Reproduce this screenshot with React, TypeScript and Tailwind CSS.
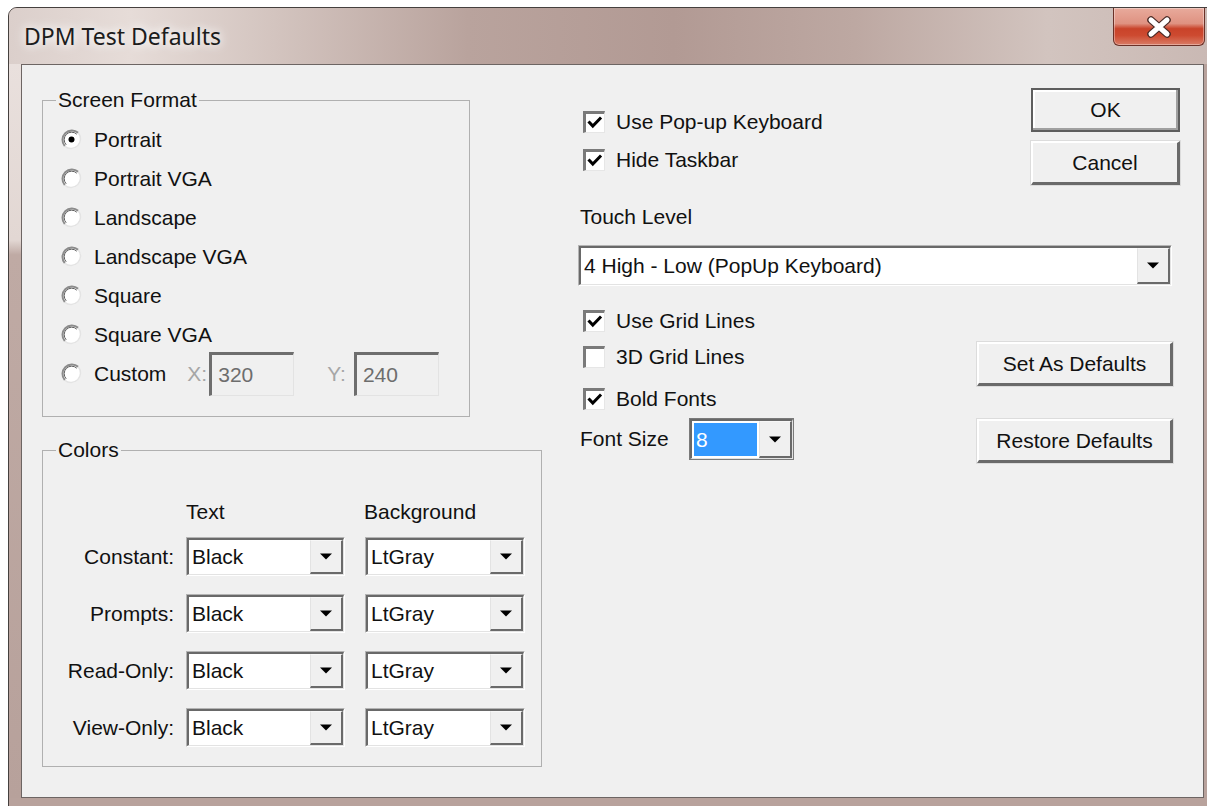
import React from "react";

const ui = "[font-family:'Liberation_Sans',Arial,sans-serif] text-[21px] leading-[24px] text-[#111111]";

function Radio({ checked }: { checked?: boolean }) {
  return (
    <svg width="21" height="21" viewBox="0 0 21 21" className="shrink-0">
      <circle cx="10.5" cy="10.5" r="9.5" fill="#ffffff" />
      <path d="M3.8 17.2 A9.5 9.5 0 0 1 17.2 3.8" stroke="#8c8c8c" strokeWidth="2" fill="none" />
      <path d="M5.2 15.8 A7.5 7.5 0 0 1 15.8 5.2" stroke="#5f5f5f" strokeWidth="1" fill="none" />
      <path d="M17.2 3.8 A9.5 9.5 0 0 1 3.8 17.2" stroke="#e4e4e4" strokeWidth="1.5" fill="none" />
      {checked && <circle cx="10.5" cy="10.5" r="3" fill="#000000" />}
    </svg>
  );
}

function Check({ checked }: { checked?: boolean }) {
  return (
    <div className="flex h-[22px] w-[22px] shrink-0 items-center justify-center border-t-[3px] border-l-[3px] border-t-[#7a7a7a] border-l-[#7a7a7a] border-b border-r border-b-[#e6e6e6] border-r-[#e6e6e6] bg-white">
      {checked && (
        <svg width="16" height="16" viewBox="0 0 16 16">
          <polyline points="2.5,7.5 5.8,11 13,3.6" fill="none" stroke="#000000" strokeWidth="3" strokeLinecap="square" />
        </svg>
      )}
    </div>
  );
}

function Arrow() {
  return (
    <svg width="12" height="7" viewBox="0 0 12 7">
      <path d="M0 0.5H12L6 6.5Z" fill="#000000" />
    </svg>
  );
}

function DropButton() {
  return (
    <div className="flex w-[33px] shrink-0 items-center justify-center self-stretch border-t border-l border-t-[#f7f7f7] border-l-[#e3e3e3] border-b-2 border-r-2 border-b-[#6a6a6a] border-r-[#6a6a6a] bg-[#f0f0f0]">
      <Arrow />
    </div>
  );
}

function Combo({ box, text, highlight, dark }: { box: string; text: string; highlight?: boolean; dark?: boolean }) {
  return (
    <div
      className={`flex ${box} border ${
        dark ? "border-[#7a7a7a]" : "border-t-[#b4b4b4] border-l-[#b4b4b4] border-b-white border-r-white"
      }`}
    >
      <div className="flex min-w-0 flex-1 border-t-2 border-l-2 border-t-[#696969] border-l-[#696969] border-b border-r border-b-[#e3e3e3] border-r-[#e3e3e3] bg-white">
        <div className="flex min-w-0 flex-1 items-center">
          {highlight ? (
            <span className="m-[2px] flex h-[calc(100%-4px)] flex-1 items-center bg-[#3399ff] pl-[2px] text-white">{text}</span>
          ) : (
            <span className="pl-[3px]">{text}</span>
          )}
        </div>
        <DropButton />
      </div>
    </div>
  );
}

function RadioRow({ label, checked, children }: { label: string; checked?: boolean; children?: React.ReactNode }) {
  return (
    <div className="flex h-[39px] items-center">
      <Radio checked={checked} />
      <span className="ml-[12px]">{label}</span>
      {children}
    </div>
  );
}

function CheckRow({ label, checked }: { label: string; checked?: boolean }) {
  return (
    <div className="flex h-[30px] items-center pl-[5px]">
      <Check checked={checked} />
      <span className="ml-[11px]">{label}</span>
    </div>
  );
}

function Disabled({ value }: { value: string }) {
  return (
    <div className="flex h-[44px] w-[85px] items-center border-t-[3px] border-l-[3px] border-t-[#6e6e6e] border-l-[#6e6e6e] border-b border-r border-b-[#e3e3e3] border-r-[#e3e3e3] bg-[#f0f0f0] pl-[6px] text-[#6d6d6d]">
      {value}
    </div>
  );
}

function Button({ label, wide, primary }: { label: string; wide?: boolean; primary?: boolean }) {
  const size = wide ? "w-[196px] h-[44px]" : "w-[149px] h-[44px]";
  return primary ? (
    <div className={`flex ${size} items-center justify-center border-2 border-[#5e5e5e] bg-[#f0f0f0] shadow-[inset_-2px_-2px_0_#a0a0a0,inset_2px_2px_0_#ffffff]`}>
      {label}
    </div>
  ) : (
    <div className={`flex ${size} items-center justify-center border-t-2 border-l-2 border-t-white border-l-white border-b-[3px] border-r-[3px] border-b-[#6a6a6a] border-r-[#6a6a6a] bg-[#f0f0f0] shadow-[0_0_0_1px_#dcdcdc]`}>
      {label}
    </div>
  );
}

const colorRows = ["Constant:", "Prompts:", "Read-Only:", "View-Only:"];

function CloseButton() {
  return (
    <div className="mr-[12px] flex h-[38px] w-[92px] items-center justify-center rounded-b-[6px] border border-t-0 border-[#6b3128] bg-[linear-gradient(180deg,#e8aa9c_0%,#df9281_42%,#c9432a_56%,#cd4a30_74%,#d97c66_100%)] shadow-[inset_0_0_0_1px_rgba(255,255,255,0.35)]">
      <svg width="28" height="22" viewBox="0 0 28 22">
        <path d="M6 4 L22 18 M22 4 L6 18" stroke="#4a2a26" strokeWidth="7.5" strokeLinecap="round" />
        <path d="M6 4 L22 18 M22 4 L6 18" stroke="#ffffff" strokeWidth="5" strokeLinecap="round" />
      </svg>
    </div>
  );
}

export default function App() {
  return (
    <div className="h-[806px] w-[1207px] overflow-hidden bg-white pl-[8px] pt-[7px]">
      <div className="flex h-[812px] w-[1210px] flex-col overflow-hidden rounded-t-[9px] border border-[#45403e] bg-[#b8a29c]">
        {/* caption */}
        <div className="flex h-[56px] shrink-0 items-start justify-between bg-[linear-gradient(90deg,#dbcfcb_0%,#e6dcd8_10%,#d3c4bf_22%,#b9a39d_38%,#b29a94_55%,#bda8a2_70%,#d2c4bf_86%,#c9b8b3_100%)]">
          <div className="flex h-full items-center pl-[15px] [font-family:'Noto_Sans',sans-serif] text-[23px] text-[#1c1c1c] [text-shadow:0_0_8px_#ffffff,0_0_14px_#ffffff]">
            DPM Test Defaults
          </div>
          <CloseButton />
        </div>

        <div className="flex shrink-0">
          <div className="w-[12px] shrink-0 bg-[linear-gradient(180deg,#e9e0dd_0%,#e2d7d3_24%,#bfaaa4_26%,#b7a19b_100%)]" />

          {/* client area */}
          <div className={`flex h-[734px] w-[1183px] shrink-0 border border-[#6d6563] bg-[#f0f0f0] pl-[20px] pt-[23px] ${ui}`}>
            {/* left column */}
            <div className="flex w-[500px] shrink-0 flex-col items-start gap-[21px]">
              <fieldset className="h-[329px] w-[428px] border border-[#b0b0b0] pt-[8px]">
                <legend className="ml-[13px] px-[2px]">Screen Format</legend>
                <div className="pl-[18px]">
                  <RadioRow label="Portrait" checked />
                  <RadioRow label="Portrait VGA" />
                  <RadioRow label="Landscape" />
                  <RadioRow label="Landscape VGA" />
                  <RadioRow label="Square" />
                  <RadioRow label="Square VGA" />
                  <RadioRow label="Custom">
                    <span className="ml-[21px] text-[#a6a6a6]">X:</span>
                    <span className="ml-[2px]">
                      <Disabled value="320" />
                    </span>
                    <span className="ml-[33px] text-[#a6a6a6]">Y:</span>
                    <span className="ml-[8px]">
                      <Disabled value="240" />
                    </span>
                  </RadioRow>
                </div>
              </fieldset>

              <fieldset className="h-[329px] w-[500px] border border-[#b0b0b0] pt-[38px]">
                <legend className="ml-[13px] px-[2px]">Colors</legend>
                <div className="grid h-[24px] grid-cols-[143px_179px_160px]">
                  <span />
                  <span>Text</span>
                  <span className="-ml-[1px]">Background</span>
                </div>
                <div className="mt-[13px] grid grid-cols-[143px_179px_160px] gap-y-[18px]">
                  {colorRows.map((r) => (
                    <React.Fragment key={r}>
                      <span className="flex items-center justify-end pr-[12px]">{r}</span>
                      <Combo box="w-[159px] h-[39px]" text="Black" />
                      <Combo box="w-[160px] h-[39px]" text="LtGray" />
                    </React.Fragment>
                  ))}
                </div>
              </fieldset>
            </div>

            {/* right column */}
            <div className="ml-[36px] flex w-[602px] shrink-0 flex-col">
              <div className="flex h-[98px] justify-between">
                <div className="flex flex-col gap-[8px] pt-[19px]">
                  <CheckRow label="Use Pop-up Keyboard" checked />
                  <CheckRow label="Hide Taskbar" checked />
                </div>
                <div className="flex flex-col gap-[9px]">
                  <Button label="OK" primary />
                  <Button label="Cancel" />
                </div>
              </div>

              <div className="mt-[19px] h-[24px] pl-[2px]">Touch Level</div>
              <div className="mt-[16px]">
                <Combo box="w-[594px] h-[41px]" text="4 High - Low (PopUp Keyboard)" />
              </div>

              <div className="mt-[20px] flex justify-between pr-[7px]">
                <div className="flex flex-col">
                  <CheckRow label="Use Grid Lines" checked />
                  <div className="mt-[6px]">
                    <CheckRow label="3D Grid Lines" />
                  </div>
                  <div className="mt-[12px]">
                    <CheckRow label="Bold Fonts" checked />
                  </div>
                  <div className="mt-[4px] flex h-[42px] items-center">
                    <span className="w-[111px] pl-[2px]">Font Size</span>
                    <Combo box="w-[105px] h-[42px]" text="8" highlight dark />
                  </div>
                </div>
                <div className="flex flex-col gap-[33px] pt-[36px]">
                  <Button label="Set As Defaults" wide />
                  <Button label="Restore Defaults" wide />
                </div>
              </div>
            </div>
          </div>

          <div className="flex-1" />
        </div>
      </div>
    </div>
  );
}
